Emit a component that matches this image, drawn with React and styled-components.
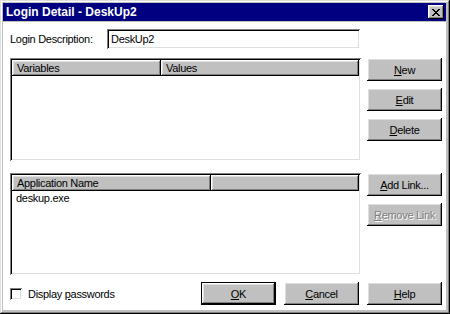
import React from 'react';
import styled, { createGlobalStyle, css } from 'styled-components';

const GlobalStyle = createGlobalStyle`
    body {
        margin: 0;
        background: #c0c0c0;
    }
`;

const raised = css`
    background: #c0c0c0;
    box-shadow: inset -1px -1px #000, inset 1px 1px #fff, inset -2px -2px #808080, inset 2px 2px #dfdfdf;
`;

const sunken = css`
    background: #fff;
    box-shadow: inset 1px 1px #808080, inset -1px -1px #fff, inset 2px 2px #000, inset -2px -2px #dfdfdf;
`;

const Frame = styled.div`
    width: 450px;
    height: 314px;
    box-sizing: border-box;
    padding: 3px 4px 4px 3px;
    background: #c0c0c0;
    box-shadow: inset -1px -1px #000, inset 1px 1px #dfdfdf, inset -2px -2px #808080, inset 2px 2px #fff;
    display: flex;
    flex-direction: column;
    font-family: "Liberation Sans", Arial, sans-serif;
    font-size: 11px;
    letter-spacing: -0.3px;
    color: #000;
`;

const TitleBar = styled.div`
    height: 18px;
    background: #000080;
    display: flex;
    align-items: center;
    justify-content: space-between;
    padding: 0 2px 0 3px;
    color: #fff;
    font-weight: bold;
    font-size: 12px;
    letter-spacing: 0;
`;

const CloseButton = styled.div`
    ${raised};
    width: 16px;
    height: 14px;
    display: flex;
    align-items: center;
    justify-content: center;
`;

const Client = styled.div`
    flex: 1;
    margin-top: 1px;
    background: #fff;
    padding: 7px 4px 0 7px;
    display: flex;
    flex-direction: column;
`;

const DescRow = styled.div`
    display: flex;
    align-items: center;
    height: 20px;
`;

const Label = styled.span`
    width: 97px;
`;

const TextBox = styled.div`
    ${sunken};
    width: 253px;
    height: 20px;
    box-sizing: border-box;
    padding: 0 4px;
    display: flex;
    align-items: center;
`;

const Section = styled.div`
    display: flex;
    gap: 6px;
    margin-top: ${props => props.mt};
`;

const ListBox = styled.div`
    ${sunken};
    width: 351px;
    height: ${props => props.h};
    box-sizing: border-box;
    padding: 2px;
    display: flex;
    flex-direction: column;
`;

const Header = styled.div`
    display: flex;
    height: 16px;
`;

const HeaderCell = styled.div`
    ${raised};
    width: ${props => props.w};
    flex: ${props => props.w ? 'none' : 1};
    box-sizing: border-box;
    padding: 0 5px;
    display: flex;
    align-items: center;
`;

const Row = styled.div`
    height: 14px;
    padding-left: 4px;
    display: flex;
    align-items: center;
`;

const ButtonColumn = styled.div`
    display: flex;
    flex-direction: column;
    gap: 7px;
`;

const Button = styled.div`
    ${raised};
    width: ${props => props.w || '75px'};
    height: 23px;
    box-sizing: border-box;
    display: flex;
    align-items: center;
    justify-content: center;
    color: ${props => props.disabled ? '#808080' : '#000'};
    text-shadow: ${props => props.disabled ? '1px 1px #fff' : 'none'};
`;

const DefaultButton = styled(Button)`
    box-shadow: inset 0 0 0 1px #000, inset -2px -2px #000, inset 2px 2px #fff, inset -3px -3px #808080, inset 3px 3px #dfdfdf;
`;

const Key = styled.span`
    text-decoration: underline;
    text-underline-offset: 1px;
`;

const Footer = styled.div`
    display: flex;
    align-items: center;
    margin-top: 7px;
`;

const CheckBox = styled.div`
    ${sunken};
    width: 12px;
    height: 12px;
    margin-right: 6px;
`;

const FooterButtons = styled.div`
    margin-left: auto;
    display: flex;
    gap: 8px;
`;

function CloseGlyph() {
    return (
        <svg width="8" height="7" viewBox="0 0 8 7" shapeRendering="crispEdges">
            <path fill="#000" d="M0 0h2v1H0z M6 0h2v1H6z M1 1h2v1H1z M5 1h2v1H5z M2 2h4v1H2z M3 3h2v1H3z M2 4h4v1H2z M1 5h2v1H1z M5 5h2v1H5z M0 6h2v1H0z M6 6h2v1H6z" />
        </svg>
    );
}

export default function App() {
    return (
        <>
            <GlobalStyle />
            <Frame>
                <TitleBar>
                    <span>Login Detail - DeskUp2</span>
                    <CloseButton><CloseGlyph /></CloseButton>
                </TitleBar>
                <Client>
                    <DescRow>
                        <Label>Login Description:</Label>
                        <TextBox>DeskUp2</TextBox>
                    </DescRow>
                    <Section mt="9px">
                        <ListBox h="103px">
                            <Header>
                                <HeaderCell w="149px">Variables</HeaderCell>
                                <HeaderCell>Values</HeaderCell>
                            </Header>
                        </ListBox>
                        <ButtonColumn>
                            <Button><Key>N</Key>ew</Button>
                            <Button><Key>E</Key>dit</Button>
                            <Button><Key>D</Key>elete</Button>
                        </ButtonColumn>
                    </Section>
                    <Section mt="12px">
                        <ListBox h="102px">
                            <Header>
                                <HeaderCell w="199px">Application Name</HeaderCell>
                                <HeaderCell />
                            </Header>
                            <Row>deskup.exe</Row>
                        </ListBox>
                        <ButtonColumn>
                            <Button><Key>A</Key>dd Link...</Button>
                            <Button disabled><Key>R</Key>emove Link</Button>
                        </ButtonColumn>
                    </Section>
                    <Footer>
                        <CheckBox />
                        <span>Display <Key>p</Key>asswords</span>
                        <FooterButtons>
                            <DefaultButton><Key>O</Key>K</DefaultButton>
                            <Button><Key>C</Key>ancel</Button>
                            <Button><Key>H</Key>elp</Button>
                        </FooterButtons>
                    </Footer>
                </Client>
            </Frame>
        </>
    );
}
